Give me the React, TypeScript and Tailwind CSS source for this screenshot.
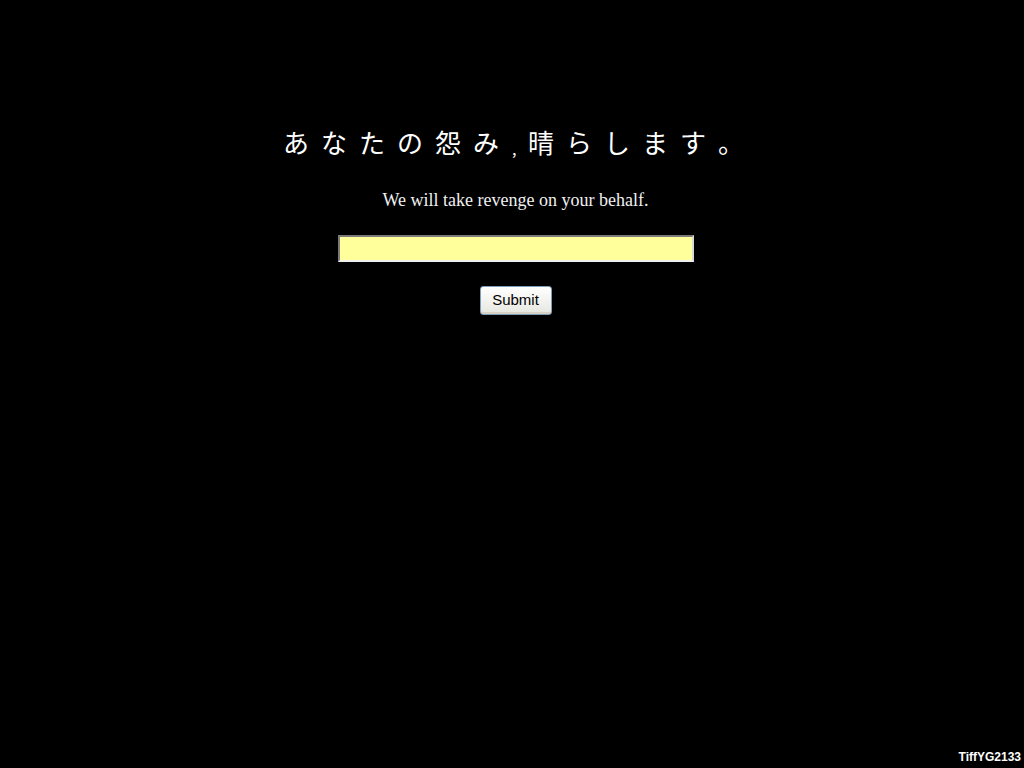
export default function App() {
  const chars = ["あ", "な", "た", "の", "怨", "み"];
  const chars2 = ["晴", "ら", "し", "ま", "す", "。"];

  return (
    <div className="relative w-[1024px] h-[768px] bg-black overflow-hidden">
      <div className="flex flex-col items-center pt-[124px] pl-[7px]">
        <h1 className="flex items-center pl-[8px] text-white text-[26px] leading-[36px] font-['Noto_Sans_CJK_JP',sans-serif]">
          {chars.map((c, i) => (
            <span key={i} className="w-[38px] text-left">
              {c}
            </span>
          ))}
          <span className="w-[17px] pl-[1px] text-[16px] relative top-[6px]">,</span>
          {chars2.map((c, i) => (
            <span key={i} className="w-[38px] text-left">
              {c}
            </span>
          ))}
        </h1>

        <p className="mt-[29px] text-[#f0f0f0] text-[18px] leading-[22px] font-['Liberation_Serif',serif]">
          We will take revenge on your behalf.
        </p>

        <input
          type="text"
          className="mt-[24px] w-[356px] h-[27px] bg-[#ffff9c] border-2 border-t-[#7a7a7a] border-l-[#7a7a7a] border-r-[#d8d8d8] border-b-[#f0f0f0] outline-none"
        />

        <button className="mt-[24px] w-[72px] h-[29px] rounded-[3px] border border-[#7f9db9] bg-gradient-to-b from-white to-[#e6e6e0] text-black text-[15px] font-['Liberation_Sans',sans-serif] shadow-[inset_0_-2px_0_#d6d0c5]">
          Submit
        </button>
      </div>

      <div className="absolute right-[3px] bottom-[2px] text-white text-[12px] font-bold font-['Liberation_Sans',sans-serif]">
        TiffYG2133
      </div>
    </div>
  );
}
